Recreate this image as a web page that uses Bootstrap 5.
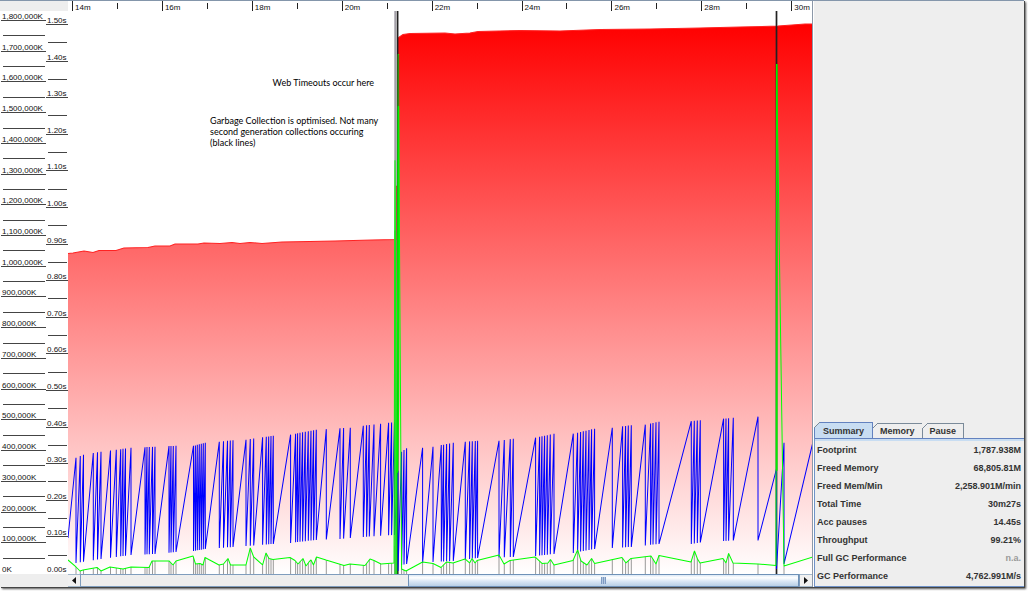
<!DOCTYPE html>
<html lang="en">
<head>
<meta charset="utf-8">
<meta name="viewport" content="width=device-width, initial-scale=1">
<title>GC Viewer</title>
<link href="https://cdn.jsdelivr.net/npm/bootstrap@5.3.0/dist/css/bootstrap.min.css" rel="stylesheet">
<style>
  body { background: #fff; color: #111; font-family: "Liberation Sans", Arial, sans-serif; font-size: 8px; line-height: 8px; padding: 0 4px 4px 0; }
  .viewer { background: #eee; border-top: 1px solid #8496ab; box-shadow: 1px 1px 0 #444, 2px 2px 2px #555; }
  .plot-pane { border-right: 1px solid #8c98a8; }
  .side-pane { flex: 0 0 211px; border-left: 1px solid #fff; }
  .top-row { height: 10px; }
  .plot-row { min-height: 0; }
  .scroll-row { height: 13px; }
  .gutter { flex: 0 0 68px; }

  .scale { padding-left: 1px; }
  .scale-mem { flex: 0 0 46px; }
  .scale-sec { flex: 0 0 22px; padding-left: 0; }
  .tick-row { flex: 1 1 0; min-height: 0; }
  .tick-row.first { flex: 0 0 10px; }
  .scale-sec .tick-row.first { flex-basis: 14px; }
  .tick-minor { flex: 1 1 0; border-bottom: 1px solid #444; margin: 0 1px 0 2px; }
  .tick-major { flex: 1 1 0; border-bottom: 1px solid #444; padding: 0 0 0 1px; line-height: 7px; white-space: nowrap; }
  .tick-row:last-child .tick-major { border-color: transparent; }

  .time-ruler { padding-left: 4px; }
  .time-step { flex: 0 0 12.15%; }
  .time-step span { border-left: 1px solid #222; padding: 3px 0 0 2px; line-height: 7px; width: 50%; }
  .time-step i { border-left: 1px solid #222; margin: 2px 0 2px; }

  .plot svg { inset: 0; }
  .note { font-family: Lato, Carlito, sans-serif; font-size: 9px; line-height: 11px; color: #000; white-space: nowrap; }
  .note-a { left: 27.5%; top: 66px; }
  .note-b { left: 19.1%; top: 104px; }

  .sb-btn { width: 12px; background: #f0f0f0; border: 1px solid #a3b8cc; border-width: 1px 0; }
  .sb-track { background: #eee; border: 1px solid #7f9dbd; border-width: 1px; }
  .sb-thumb { width: 54.4%; margin: -1px 0; border: 1px solid #6f92b8; background: linear-gradient(#dce9f6, #fff 25%, #dbe8f5 55%, #b8cfe5); }
  .sb-grip { width: 5px; height: 7px; background: repeating-linear-gradient(90deg, #7d9ac2 0 1px, #b4c8e0 1px 2px); }

  .tab-btn { position: relative; font-size: 9px; line-height: 10px; font-weight: bold; color: #333; background: #eee; border: 1px solid #7a8a99; border-bottom: 0; padding: 2px 7px 2px; margin-right: -1px; }
  .tab-btn::before { content: ""; position: absolute; left: -1px; top: -1px; width: 6px; height: 6px; background: linear-gradient(135deg, #eee 42%, #7a8a99 43% 55%, transparent 56%); }
  .tab-btn.active { background: #c8ddf2; border-color: #6382bf; padding: 3px 8px 2px; z-index: 1; }
  .stats { border: 1px solid #6f92c8; border-right: 0; border-top: 1px solid #6382bf; box-shadow: inset 0 2px 0 #c8ddf2; padding: 2px 3px 1px 2px; }
  .stats table { font-size: 9px; line-height: 10px; font-weight: bold; color: #333; }
  .stats th, .stats td { height: 18px; padding: 0; vertical-align: middle; }
  .stats .not-available { color: #999; }
</style>
</head>
<body class="vh-100 overflow-hidden">
<main class="viewer d-flex h-100">
  <section class="plot-pane d-flex flex-column flex-grow-1" aria-label="Heap chart">
    <div class="top-row d-flex">
      <div class="gutter"></div>
      <div class="time-ruler d-flex flex-grow-1 bg-white overflow-hidden" id="timeRuler"></div>
    </div>
    <div class="plot-row d-flex flex-grow-1 bg-white">
      <div class="scale scale-mem d-flex flex-column" id="memScale"></div>
      <div class="scale scale-sec d-flex flex-column" id="secScale"></div>
      <div class="plot position-relative flex-grow-1">
        <svg class="position-absolute w-100 h-100" viewBox="68 11 744 562" preserveAspectRatio="none" role="img" aria-label="Heap usage and pauses over time">
          <defs>
            <linearGradient id="heapFill" gradientUnits="userSpaceOnUse" x1="0" y1="24" x2="0" y2="573">
              <stop offset="0" stop-color="#f00"/><stop offset="1" stop-color="#fff"/>
            </linearGradient>
          </defs>
          <path id="heapArea" fill="url(#heapFill)"/>
          <path id="heapLine" fill="none" stroke="#f22" stroke-width="1"/>
          <path id="gcLines" fill="none" stroke="#999" stroke-width="1"/>
          <path d="M395.3 11V573" stroke="#a3a0a8" stroke-width="2"/>
          <path d="M397.6 11V573M776.5 11V573" stroke="#222" stroke-width="1.7"/>
          <path id="usedLine" fill="none" stroke="#00f" stroke-width="1" stroke-linejoin="bevel"/>
          <path id="pauseLine" fill="none" stroke="#0f0" stroke-width="1" stroke-linejoin="bevel"/>
          <path d="M395.3 230V573" stroke="#1de01d" stroke-width="2" opacity=".75"/>
          <path d="M398.4 55V106" stroke="#3a8a10" stroke-width="1.5"/>
          <path d="M398.4 106V400L397.5 472M776.8 64V470" fill="none" stroke="#0e0" stroke-width="1.6"/>
        </svg>
        <div class="note note-a position-absolute">Web Timeouts occur here</div>
        <div class="note note-b position-absolute">Garbage Collection is optimised. Not many<br>second generation collections occuring<br>(black lines)</div>
      </div>
    </div>
    <div class="scroll-row d-flex">
      <div class="gutter"></div>
      <button class="sb-btn d-flex align-items-center justify-content-center p-0" type="button" aria-label="Scroll left"><svg width="4" height="7" viewBox="0 0 4 7"><path d="M4 0v7L0 3.500z" fill="#111"/></svg></button>
      <div class="sb-track d-flex flex-grow-1 justify-content-end" role="scrollbar" aria-controls="timeRuler" aria-orientation="horizontal" aria-valuenow="100">
        <div class="sb-thumb d-flex align-items-center justify-content-center"><div class="sb-grip"></div></div>
      </div>
      <button class="sb-btn d-flex align-items-center justify-content-center p-0" type="button" aria-label="Scroll right"><svg width="4" height="7" viewBox="0 0 4 7"><path d="M0 0v7L4 3.500z" fill="#111"/></svg></button>
    </div>
  </section>
  <aside class="side-pane d-flex flex-column justify-content-end">
    <div class="d-flex align-items-end" role="tablist">
      <button class="tab-btn active" type="button" role="tab" aria-selected="true" aria-controls="summary">Summary</button>
      <button class="tab-btn" type="button" role="tab" aria-selected="false">Memory</button>
      <button class="tab-btn" type="button" role="tab" aria-selected="false">Pause</button>
    </div>
    <div class="stats" id="summary" role="tabpanel">
      <table class="w-100">
        <tbody>
          <tr><th scope="row">Footprint</th><td class="text-end">1,787.938M</td></tr>
          <tr><th scope="row">Freed Memory</th><td class="text-end">68,805.81M</td></tr>
          <tr><th scope="row">Freed Mem/Min</th><td class="text-end">2,258.901M/min</td></tr>
          <tr><th scope="row">Total Time</th><td class="text-end">30m27s</td></tr>
          <tr><th scope="row">Acc pauses</th><td class="text-end">14.45s</td></tr>
          <tr><th scope="row">Throughput</th><td class="text-end">99.21%</td></tr>
          <tr><th scope="row">Full GC Performance</th><td class="text-end not-available">n.a.</td></tr>
          <tr><th scope="row">GC Performance</th><td class="text-end">4,762.991M/s</td></tr>
        </tbody>
      </table>
    </div>
  </aside>
</main>
<script src="https://cdn.jsdelivr.net/npm/bootstrap@5.3.0/dist/js/bootstrap.bundle.min.js"></script>
<script>
  // Rulers
  function scale(id, labels) {
    document.getElementById(id).innerHTML = labels.map((t, i) =>
      `<div class="tick-row d-flex flex-column ${i ? '' : 'first'}">${i ? '<div class="tick-minor"></div>' : ''}<div class="tick-major d-flex align-items-end">${t}</div></div>`).join('');
  }
  const mem = [], sec = [];
  for (let v = 18; v >= 0; v--) mem.push((v * 100000).toLocaleString('en-US') + 'K');
  for (let v = 15; v >= 0; v--) sec.push((v / 10).toFixed(2) + 's');
  scale('memScale', mem);
  scale('secScale', sec);
  let steps = '';
  for (let m = 14; m <= 30; m += 2) steps += `<div class="time-step d-flex"><span>${m}m</span><i></i></div>`;
  document.getElementById('timeRuler').innerHTML = steps;

  // Total heap
  const heap = '68,253 73,252.5 84,250.5 93,252 99,250 116,250 124,247.5 148,247 155,245.5 170,245.5 175,243.5 198,243.5 204,242.5 220,243 232,242 240,243 250,242 262,243 282,241.5 310,241 335,240.5 372,239.5 396,239 396.300,186 397.400,186 397.800,38 403,34.5 410,33.5 445,33 455,34 470,33 478,31.5 520,30.5 560,31 600,29.5 650,29 700,28 740,27 778,26 792,25 805,24 813,24';
  document.getElementById('heapLine').setAttribute('d', 'M' + heap);
  document.getElementById('heapArea').setAttribute('d', 'M' + heap + ' 813,573 68,573Z');

  // Used heap: collection times, with the heap before and after each one
  const young = [76,80.3,83.5,93.3,97.5,101,110.5,116.3,120.7,123,125.5,131,145,147,149.3,152.5,155,169,171,173.3,176,193.5,195.4,197.3,199.3,201.3,203.3,205.3,219.3,223.5,227.5,230.3,233,246,250.3,253.7,262.6,266.3,268.7,271,273.3,290.6,295.6,297.6,300,302.6,305.3,308.3,311,313.6,316.3,326.3,340,343.6,350.3,363.3,366.6,369.3,374,380.6,388.6,391.6,394.5,
    398,401.6,404,406.6,422.6,433,441.3,443.6,446.6,449.6,453.3,465.3,469.6,472.3,475.3,477.6,499,504.3,510.3,513.3,535.6,539.6,542,544.6,547.3,550.3,554,573.3,577.6,580.6,583.3,586,589,591.6,594.6,612.3,622.6,625.6,628.3,631.3,645.3,650.6,653,656,659,691.3,694.3,697.3,700.3,723.6,726,728.6,733.3,758,776.5,784];
  const tops = [[76,457],[83,454],[101,451],[131,447],[155,446],[176,445],[194,445],[205,442],[219,441],[233,439.5],[246,439],[273,435],[290,434],[316,429],[350,427],[363,425],[380,423],[394.5,421.5],[398,470],[401.6,451],[406.6,447.5],[422.6,447],[433,446],[453,442],[477,440],[499,440],[513,438],[535,437],[554,433],[573,433],[594,428],[612,427],[631,424.5],[645,424],[659,421],[691,420.5],[700,419.5],[723,418],[733,417],[758,416],[776.5,468],[784,442]];
  const lows = [[76,562],[101,558],[131,554],[155,553],[176,551],[194,550],[205,548],[233,546],[273,543],[290,542],[316,539],[340,538],[363,536],[394.5,534],[398,570],[401.6,564],[406.6,563],[433,561],[453,560],[477,557],[513,556],[535,555],[554,553],[573,552],[594,548],[631,546],[659,543],[691,543],[700,541.5],[733,539.5],[758,539.5],[776.5,568],[784,563]];
  function at(points, x) {
    if (x <= points[0][0]) return points[0][1];
    for (let i = 1; i < points.length; i++) {
      const [x0, y0] = points[i - 1], [x1, y1] = points[i];
      if (x <= x1) return y0 + (y1 - y0) * (x - x0) / (x1 - x0);
    }
    return points[points.length - 1][1];
  }
  document.getElementById('usedLine').setAttribute('d',
    'M68,537' + young.map(x => `L${x},${at(tops, x)}V${at(lows, x)}`).join('') + 'L813,441');

  // Pause lengths
  const pause = [[68,559],[76,566],[80,570],[83,569],[97,566.5],[101,570],[110,566],[123,568],[131,566],[149,566.5],[152,560],[169,560],[173,564],[176,560],[193,555],[195.5,563],[200,562.5],[203,564],[205,556.5],[219,564],[223.5,563],[228,557.5],[230.5,564],[246,564],[250.3,547],[253.7,556],[262.6,564],[266,552],[269,557.5],[273,558.5],[290,556.5],[295,559.5],[298,563],[303,557.5],[306,565],[309,561],[311,559],[313.5,564],[316.5,556],[326,559],[344,564.5],[350,563],[365,564.5],[370,558],[374,559.5],[381,563],[394,562],[395,160],[396.7,573],[398.3,54],[401.6,568],[406,570],[422.6,561],[433,562.5],[441,566.5],[446.6,561],[453,562],[465,558],[469.6,562],[472,557.5],[475,562],[477,559.5],[499,554],[504,563],[510,559.5],[535,556],[542,562.5],[548,562],[550.5,558.5],[554,564],[573,559.5],[577.6,549],[581,560],[587,564],[591.6,557.5],[594.6,562.5],[622,556.5],[626,562],[631,557.5],[651,555],[656,563],[659,554.5],[691,561],[694.5,550],[697.5,558],[700,562],[723,557.5],[726,562],[728.6,552.5],[733,562],[758,563],[776,564.5],[776.6,64],[784,565],[813,556]];
  document.getElementById('pauseLine').setAttribute('d', 'M' + pause.join(' '));
  document.getElementById('gcLines').setAttribute('d', young.map(x => `M${x},${Math.max(545, at(pause, x))}V573`).join(''));
</script>
</body>
</html>
